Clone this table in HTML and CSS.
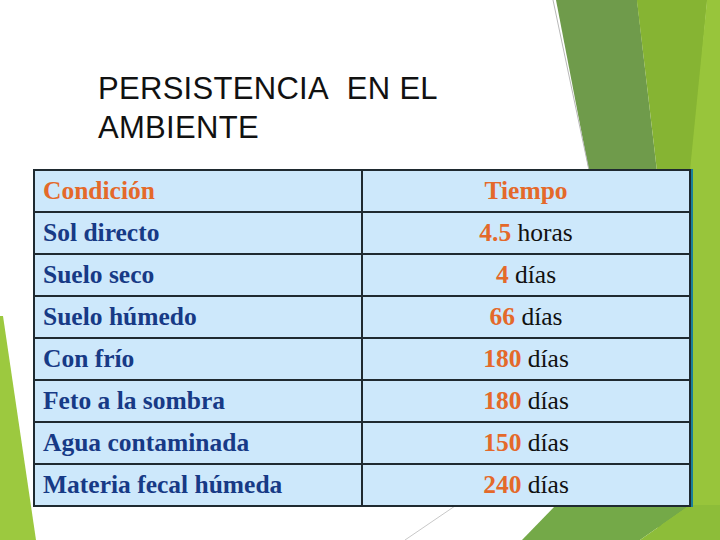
FILE: index.html
```html
<!DOCTYPE html>
<html lang="es">
<head>
<meta charset="utf-8">
<title>Persistencia en el ambiente</title>
<link rel="stylesheet" href="styles.css">
</head>
<body>
<div class="slide">
  <svg class="bg" width="720" height="540" viewBox="0 0 720 540" aria-hidden="true">
    <polygon points="556,0 637,0 700,540 660,540" fill="#6f9b4b"/>
    <polygon points="637,0 707,0 660,540 700,540" fill="#86b433"/>
    <polygon points="637,0 707,0 690,170 658,170" fill="#86b433"/>
    <polygon points="707,0 720,0 720,540 660,540 690,170" fill="#98c53b"/>
    <line x1="553" y1="0" x2="590" y2="175" stroke="#b8b8b8" stroke-width="1"/>
    <polygon points="522,540 556,505 690,505 640,540" fill="#74a948"/>
    <polygon points="640,540 690,505 720,505 720,540" fill="#8dbd39"/>
    <line x1="405" y1="540" x2="455" y2="506" stroke="#c8c8c8" stroke-width="1"/>
    <polygon points="0,316 3,316 36,540 0,540" fill="#9cc93f"/>
  </svg>
  <h1 class="title">PERSISTENCIA&nbsp; EN EL<br>AMBIENTE</h1>
  <table class="data">
    <tr class="head"><td class="cond">Condición</td><td class="time">Tiempo</td></tr>
    <tr><td class="cond">Sol directo</td><td class="time"><b>4.5</b> horas</td></tr>
    <tr><td class="cond">Suelo seco</td><td class="time"><b>4</b> días</td></tr>
    <tr><td class="cond">Suelo húmedo</td><td class="time"><b>66</b> días</td></tr>
    <tr><td class="cond">Con frío</td><td class="time"><b>180</b> días</td></tr>
    <tr><td class="cond">Feto a la sombra</td><td class="time"><b>180</b> días</td></tr>
    <tr><td class="cond">Agua contaminada</td><td class="time"><b>150</b> días</td></tr>
    <tr><td class="cond">Materia fecal húmeda</td><td class="time"><b>240</b> días</td></tr>
  </table>
</div>
</body>
</html>
```

FILE: styles.css
```css
html, body {
  margin: 0;
  padding: 0;
  background: #ffffff;
}

.slide {
  position: relative;
  width: 720px;
  height: 540px;
  overflow: hidden;
  background: #ffffff;
  display: flex;
  flex-direction: column;
}

.bg {
  position: absolute;
  left: 0;
  top: 0;
}

.title {
  position: relative;
  margin: 69px 0 0 98px;
  font-family: "Liberation Sans", Arial, sans-serif;
  font-weight: normal;
  font-size: 31px;
  line-height: 39px;
  letter-spacing: 0.3px;
  color: #111111;
}

.data {
  position: relative;
  margin: 22px 0 0 33px;
  width: 658px;
  border-collapse: collapse;
  background: #cde8fb;
  box-shadow: 2px 0 0 #1b7f9a;
  table-layout: fixed;
}

.data td {
  height: 40px;
  padding: 0;
  border: 2px solid #1f2a30;
  font-family: "Liberation Serif", "Times New Roman", serif;
  font-size: 25.5px;
  line-height: 40px;
  white-space: nowrap;
}

.data td.cond {
  width: 318px;
  padding-left: 8px;
  font-weight: bold;
  color: #173a86;
}

.data td.time {
  text-align: center;
  color: #111111;
}

.data td.time b {
  color: #e4692a;
  font-weight: bold;
}

.data tr.head td {
  color: #e4692a;
  font-weight: bold;
}
```
